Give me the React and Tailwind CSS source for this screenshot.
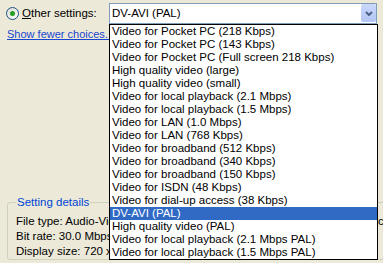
const items = [
  'Video for Pocket PC (218 Kbps)',
  'Video for Pocket PC (143 Kbps)',
  'Video for Pocket PC (Full screen 218 Kbps)',
  'High quality video (large)',
  'High quality video (small)',
  'Video for local playback (2.1 Mbps)',
  'Video for local playback (1.5 Mbps)',
  'Video for LAN (1.0 Mbps)',
  'Video for LAN (768 Kbps)',
  'Video for broadband (512 Kbps)',
  'Video for broadband (340 Kbps)',
  'Video for broadband (150 Kbps)',
  'Video for ISDN (48 Kbps)',
  'Video for dial-up access (38 Kbps)',
  'DV-AVI (PAL)',
  'High quality video (PAL)',
  'Video for local playback (2.1 Mbps PAL)',
  'Video for local playback (1.5 Mbps PAL)',
];

const selected = 'DV-AVI (PAL)';

export default function App() {
  return (
    <div
      className="relative w-[383px] h-[263px] overflow-hidden bg-[#ece9d8] text-[11.5px] leading-[13px] text-black"
      style={{ fontFamily: '"Liberation Sans", Arial, sans-serif' }}
    >
      {/* Top row: radio + combo */}
      <div className="flex pt-[3px]">
        <label className="flex w-[109px] items-center gap-[3px] pl-[6px]">
          <span className="flex h-[13px] w-[13px] items-center justify-center rounded-full border border-[#1c5180] bg-gradient-to-br from-[#dcdcd7] to-white">
            <span className="h-[5px] w-[5px] rounded-full bg-[#21a121]" />
          </span>
          <span>
            <span className="underline">O</span>ther settings:
          </span>
        </label>
        <div className="flex h-[21px] w-[268px] border border-[#7f9db9] bg-white">
          <span className="flex flex-1 items-center pl-[2px]">{selected}</span>
          <span className="mb-[1px] flex w-[15px] items-center justify-center rounded-[2px] bg-gradient-to-b from-[#cbd8fc] to-[#b3c5f4]">
            <svg width="8" height="5" viewBox="0 0 8 5">
              <polyline points="1,1 4,4 7,1" fill="none" stroke="#4d6185" strokeWidth="2" />
            </svg>
          </span>
        </div>
      </div>

      <a className="mt-[4px] ml-[7px] block w-fit whitespace-nowrap text-[11px] text-[#1846cf] underline">
        Show fewer choices...
      </a>

      {/* Setting details group */}
      <fieldset className="mt-[155px] ml-[7px] w-[420px] rounded-[3px] border border-[#d0d0bf] pl-[8px] pt-[5px]">
        <legend className="px-[1px] text-[#0046d5]">Setting details</legend>
        <div className="leading-[15px]">
          <div className="flex">
            <span className="w-[362px] shrink-0">File type: Audio-Video Interleaved (AVI)</span>
            <span>codec</span>
          </div>
          <div>Bit rate: 30.0 Mbps</div>
          <div>Display size: 720 x 576 pixels</div>
        </div>
      </fieldset>

      {/* Open dropdown list */}
      <ul className="absolute left-[109px] top-[24px] w-[269px] border border-black bg-white">
        {items.map((item) => (
          <li
            key={item}
            className={`h-[13px] whitespace-nowrap pl-[2px] leading-[13px] ${
              item === selected ? 'bg-[#316ac5] text-white' : ''
            }`}
          >
            {item}
          </li>
        ))}
      </ul>
    </div>
  );
}
